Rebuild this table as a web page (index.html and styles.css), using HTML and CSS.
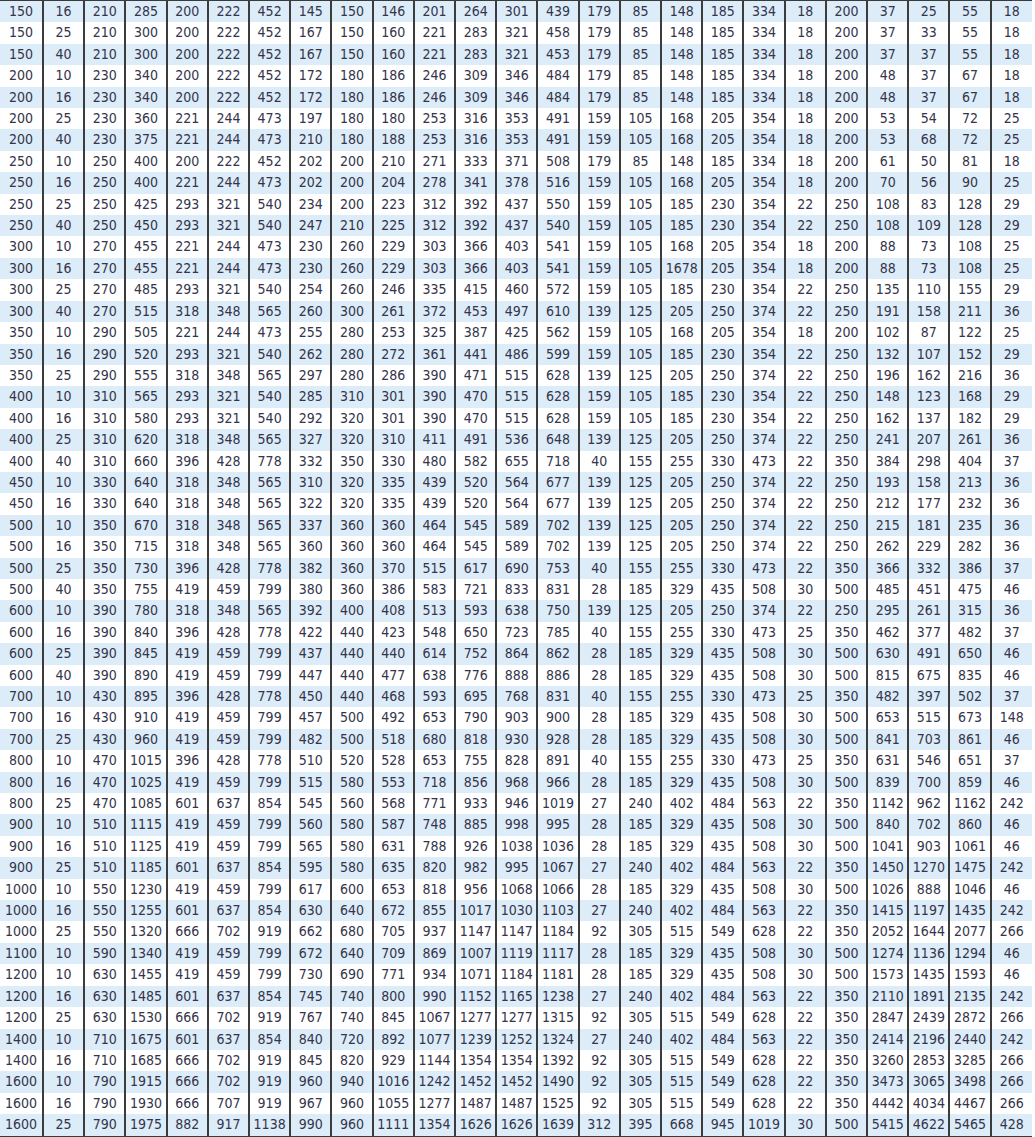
FILE: index.html
```html
<!DOCTYPE html>
<html lang="en">
<head>
<meta charset="utf-8">
<title>Dimension table</title>
<link rel="stylesheet" href="styles.css">
</head>
<body>
<table class="dims">
<colgroup><col class="c-first"><col span="24" class="c-rest"></colgroup>
<tbody>
<tr><td>150<td>16<td>210<td>285<td>200<td>222<td>452<td>145<td>150<td>146<td>201<td>264<td>301<td>439<td>179<td>85<td>148<td>185<td>334<td>18<td>200<td>37<td>25<td>55<td>18</tr>
<tr><td>150<td>25<td>210<td>300<td>200<td>222<td>452<td>167<td>150<td>160<td>221<td>283<td>321<td>458<td>179<td>85<td>148<td>185<td>334<td>18<td>200<td>37<td>33<td>55<td>18</tr>
<tr><td>150<td>40<td>210<td>300<td>200<td>222<td>452<td>167<td>150<td>160<td>221<td>283<td>321<td>453<td>179<td>85<td>148<td>185<td>334<td>18<td>200<td>37<td>37<td>55<td>18</tr>
<tr><td>200<td>10<td>230<td>340<td>200<td>222<td>452<td>172<td>180<td>186<td>246<td>309<td>346<td>484<td>179<td>85<td>148<td>185<td>334<td>18<td>200<td>48<td>37<td>67<td>18</tr>
<tr><td>200<td>16<td>230<td>340<td>200<td>222<td>452<td>172<td>180<td>186<td>246<td>309<td>346<td>484<td>179<td>85<td>148<td>185<td>334<td>18<td>200<td>48<td>37<td>67<td>18</tr>
<tr><td>200<td>25<td>230<td>360<td>221<td>244<td>473<td>197<td>180<td>180<td>253<td>316<td>353<td>491<td>159<td>105<td>168<td>205<td>354<td>18<td>200<td>53<td>54<td>72<td>25</tr>
<tr><td>200<td>40<td>230<td>375<td>221<td>244<td>473<td>210<td>180<td>188<td>253<td>316<td>353<td>491<td>159<td>105<td>168<td>205<td>354<td>18<td>200<td>53<td>68<td>72<td>25</tr>
<tr><td>250<td>10<td>250<td>400<td>200<td>222<td>452<td>202<td>200<td>210<td>271<td>333<td>371<td>508<td>179<td>85<td>148<td>185<td>334<td>18<td>200<td>61<td>50<td>81<td>18</tr>
<tr><td>250<td>16<td>250<td>400<td>221<td>244<td>473<td>202<td>200<td>204<td>278<td>341<td>378<td>516<td>159<td>105<td>168<td>205<td>354<td>18<td>200<td>70<td>56<td>90<td>25</tr>
<tr><td>250<td>25<td>250<td>425<td>293<td>321<td>540<td>234<td>200<td>223<td>312<td>392<td>437<td>550<td>159<td>105<td>185<td>230<td>354<td>22<td>250<td>108<td>83<td>128<td>29</tr>
<tr><td>250<td>40<td>250<td>450<td>293<td>321<td>540<td>247<td>210<td>225<td>312<td>392<td>437<td>540<td>159<td>105<td>185<td>230<td>354<td>22<td>250<td>108<td>109<td>128<td>29</tr>
<tr><td>300<td>10<td>270<td>455<td>221<td>244<td>473<td>230<td>260<td>229<td>303<td>366<td>403<td>541<td>159<td>105<td>168<td>205<td>354<td>18<td>200<td>88<td>73<td>108<td>25</tr>
<tr><td>300<td>16<td>270<td>455<td>221<td>244<td>473<td>230<td>260<td>229<td>303<td>366<td>403<td>541<td>159<td>105<td>1678<td>205<td>354<td>18<td>200<td>88<td>73<td>108<td>25</tr>
<tr><td>300<td>25<td>270<td>485<td>293<td>321<td>540<td>254<td>260<td>246<td>335<td>415<td>460<td>572<td>159<td>105<td>185<td>230<td>354<td>22<td>250<td>135<td>110<td>155<td>29</tr>
<tr><td>300<td>40<td>270<td>515<td>318<td>348<td>565<td>260<td>300<td>261<td>372<td>453<td>497<td>610<td>139<td>125<td>205<td>250<td>374<td>22<td>250<td>191<td>158<td>211<td>36</tr>
<tr><td>350<td>10<td>290<td>505<td>221<td>244<td>473<td>255<td>280<td>253<td>325<td>387<td>425<td>562<td>159<td>105<td>168<td>205<td>354<td>18<td>200<td>102<td>87<td>122<td>25</tr>
<tr><td>350<td>16<td>290<td>520<td>293<td>321<td>540<td>262<td>280<td>272<td>361<td>441<td>486<td>599<td>159<td>105<td>185<td>230<td>354<td>22<td>250<td>132<td>107<td>152<td>29</tr>
<tr><td>350<td>25<td>290<td>555<td>318<td>348<td>565<td>297<td>280<td>286<td>390<td>471<td>515<td>628<td>139<td>125<td>205<td>250<td>374<td>22<td>250<td>196<td>162<td>216<td>36</tr>
<tr><td>400<td>10<td>310<td>565<td>293<td>321<td>540<td>285<td>310<td>301<td>390<td>470<td>515<td>628<td>159<td>105<td>185<td>230<td>354<td>22<td>250<td>148<td>123<td>168<td>29</tr>
<tr><td>400<td>16<td>310<td>580<td>293<td>321<td>540<td>292<td>320<td>301<td>390<td>470<td>515<td>628<td>159<td>105<td>185<td>230<td>354<td>22<td>250<td>162<td>137<td>182<td>29</tr>
<tr><td>400<td>25<td>310<td>620<td>318<td>348<td>565<td>327<td>320<td>310<td>411<td>491<td>536<td>648<td>139<td>125<td>205<td>250<td>374<td>22<td>250<td>241<td>207<td>261<td>36</tr>
<tr><td>400<td>40<td>310<td>660<td>396<td>428<td>778<td>332<td>350<td>330<td>480<td>582<td>655<td>718<td>40<td>155<td>255<td>330<td>473<td>22<td>350<td>384<td>298<td>404<td>37</tr>
<tr><td>450<td>10<td>330<td>640<td>318<td>348<td>565<td>310<td>320<td>335<td>439<td>520<td>564<td>677<td>139<td>125<td>205<td>250<td>374<td>22<td>250<td>193<td>158<td>213<td>36</tr>
<tr><td>450<td>16<td>330<td>640<td>318<td>348<td>565<td>322<td>320<td>335<td>439<td>520<td>564<td>677<td>139<td>125<td>205<td>250<td>374<td>22<td>250<td>212<td>177<td>232<td>36</tr>
<tr><td>500<td>10<td>350<td>670<td>318<td>348<td>565<td>337<td>360<td>360<td>464<td>545<td>589<td>702<td>139<td>125<td>205<td>250<td>374<td>22<td>250<td>215<td>181<td>235<td>36</tr>
<tr><td>500<td>16<td>350<td>715<td>318<td>348<td>565<td>360<td>360<td>360<td>464<td>545<td>589<td>702<td>139<td>125<td>205<td>250<td>374<td>22<td>250<td>262<td>229<td>282<td>36</tr>
<tr><td>500<td>25<td>350<td>730<td>396<td>428<td>778<td>382<td>360<td>370<td>515<td>617<td>690<td>753<td>40<td>155<td>255<td>330<td>473<td>22<td>350<td>366<td>332<td>386<td>37</tr>
<tr><td>500<td>40<td>350<td>755<td>419<td>459<td>799<td>380<td>360<td>386<td>583<td>721<td>833<td>831<td>28<td>185<td>329<td>435<td>508<td>30<td>500<td>485<td>451<td>475<td>46</tr>
<tr><td>600<td>10<td>390<td>780<td>318<td>348<td>565<td>392<td>400<td>408<td>513<td>593<td>638<td>750<td>139<td>125<td>205<td>250<td>374<td>22<td>250<td>295<td>261<td>315<td>36</tr>
<tr><td>600<td>16<td>390<td>840<td>396<td>428<td>778<td>422<td>440<td>423<td>548<td>650<td>723<td>785<td>40<td>155<td>255<td>330<td>473<td>25<td>350<td>462<td>377<td>482<td>37</tr>
<tr><td>600<td>25<td>390<td>845<td>419<td>459<td>799<td>437<td>440<td>440<td>614<td>752<td>864<td>862<td>28<td>185<td>329<td>435<td>508<td>30<td>500<td>630<td>491<td>650<td>46</tr>
<tr><td>600<td>40<td>390<td>890<td>419<td>459<td>799<td>447<td>440<td>477<td>638<td>776<td>888<td>886<td>28<td>185<td>329<td>435<td>508<td>30<td>500<td>815<td>675<td>835<td>46</tr>
<tr><td>700<td>10<td>430<td>895<td>396<td>428<td>778<td>450<td>440<td>468<td>593<td>695<td>768<td>831<td>40<td>155<td>255<td>330<td>473<td>25<td>350<td>482<td>397<td>502<td>37</tr>
<tr><td>700<td>16<td>430<td>910<td>419<td>459<td>799<td>457<td>500<td>492<td>653<td>790<td>903<td>900<td>28<td>185<td>329<td>435<td>508<td>30<td>500<td>653<td>515<td>673<td>148</tr>
<tr><td>700<td>25<td>430<td>960<td>419<td>459<td>799<td>482<td>500<td>518<td>680<td>818<td>930<td>928<td>28<td>185<td>329<td>435<td>508<td>30<td>500<td>841<td>703<td>861<td>46</tr>
<tr><td>800<td>10<td>470<td>1015<td>396<td>428<td>778<td>510<td>520<td>528<td>653<td>755<td>828<td>891<td>40<td>155<td>255<td>330<td>473<td>25<td>350<td>631<td>546<td>651<td>37</tr>
<tr><td>800<td>16<td>470<td>1025<td>419<td>459<td>799<td>515<td>580<td>553<td>718<td>856<td>968<td>966<td>28<td>185<td>329<td>435<td>508<td>30<td>500<td>839<td>700<td>859<td>46</tr>
<tr><td>800<td>25<td>470<td>1085<td>601<td>637<td>854<td>545<td>560<td>568<td>771<td>933<td>946<td>1019<td>27<td>240<td>402<td>484<td>563<td>22<td>350<td>1142<td>962<td>1162<td>242</tr>
<tr><td>900<td>10<td>510<td>1115<td>419<td>459<td>799<td>560<td>580<td>587<td>748<td>885<td>998<td>995<td>28<td>185<td>329<td>435<td>508<td>30<td>500<td>840<td>702<td>860<td>46</tr>
<tr><td>900<td>16<td>510<td>1125<td>419<td>459<td>799<td>565<td>580<td>631<td>788<td>926<td>1038<td>1036<td>28<td>185<td>329<td>435<td>508<td>30<td>500<td>1041<td>903<td>1061<td>46</tr>
<tr><td>900<td>25<td>510<td>1185<td>601<td>637<td>854<td>595<td>580<td>635<td>820<td>982<td>995<td>1067<td>27<td>240<td>402<td>484<td>563<td>22<td>350<td>1450<td>1270<td>1475<td>242</tr>
<tr><td>1000<td>10<td>550<td>1230<td>419<td>459<td>799<td>617<td>600<td>653<td>818<td>956<td>1068<td>1066<td>28<td>185<td>329<td>435<td>508<td>30<td>500<td>1026<td>888<td>1046<td>46</tr>
<tr><td>1000<td>16<td>550<td>1255<td>601<td>637<td>854<td>630<td>640<td>672<td>855<td>1017<td>1030<td>1103<td>27<td>240<td>402<td>484<td>563<td>22<td>350<td>1415<td>1197<td>1435<td>242</tr>
<tr><td>1000<td>25<td>550<td>1320<td>666<td>702<td>919<td>662<td>680<td>705<td>937<td>1147<td>1147<td>1184<td>92<td>305<td>515<td>549<td>628<td>22<td>350<td>2052<td>1644<td>2077<td>266</tr>
<tr><td>1100<td>10<td>590<td>1340<td>419<td>459<td>799<td>672<td>640<td>709<td>869<td>1007<td>1119<td>1117<td>28<td>185<td>329<td>435<td>508<td>30<td>500<td>1274<td>1136<td>1294<td>46</tr>
<tr><td>1200<td>10<td>630<td>1455<td>419<td>459<td>799<td>730<td>690<td>771<td>934<td>1071<td>1184<td>1181<td>28<td>185<td>329<td>435<td>508<td>30<td>500<td>1573<td>1435<td>1593<td>46</tr>
<tr><td>1200<td>16<td>630<td>1485<td>601<td>637<td>854<td>745<td>740<td>800<td>990<td>1152<td>1165<td>1238<td>27<td>240<td>402<td>484<td>563<td>22<td>350<td>2110<td>1891<td>2135<td>242</tr>
<tr><td>1200<td>25<td>630<td>1530<td>666<td>702<td>919<td>767<td>740<td>845<td>1067<td>1277<td>1277<td>1315<td>92<td>305<td>515<td>549<td>628<td>22<td>350<td>2847<td>2439<td>2872<td>266</tr>
<tr><td>1400<td>10<td>710<td>1675<td>601<td>637<td>854<td>840<td>720<td>892<td>1077<td>1239<td>1252<td>1324<td>27<td>240<td>402<td>484<td>563<td>22<td>350<td>2414<td>2196<td>2440<td>242</tr>
<tr><td>1400<td>16<td>710<td>1685<td>666<td>702<td>919<td>845<td>820<td>929<td>1144<td>1354<td>1354<td>1392<td>92<td>305<td>515<td>549<td>628<td>22<td>350<td>3260<td>2853<td>3285<td>266</tr>
<tr><td>1600<td>10<td>790<td>1915<td>666<td>702<td>919<td>960<td>940<td>1016<td>1242<td>1452<td>1452<td>1490<td>92<td>305<td>515<td>549<td>628<td>22<td>350<td>3473<td>3065<td>3498<td>266</tr>
<tr><td>1600<td>16<td>790<td>1930<td>666<td>707<td>919<td>967<td>960<td>1055<td>1277<td>1487<td>1487<td>1525<td>92<td>305<td>515<td>549<td>628<td>22<td>350<td>4442<td>4034<td>4467<td>266</tr>
<tr><td>1600<td>25<td>790<td>1975<td>882<td>917<td>1138<td>990<td>960<td>1111<td>1354<td>1626<td>1626<td>1639<td>312<td>395<td>668<td>945<td>1019<td>30<td>500<td>5415<td>4622<td>5465<td>428</tr>
</tbody>
</table>
</body>
</html>
```
FILE: styles.css
```css
html, body {
  margin: 0;
  padding: 0;
  background: #ffffff;
}

.dims {
  width: 1032px;
  table-layout: fixed;
  border-collapse: collapse;
  border-top: 1px solid #3a3a3a;
  border-bottom: 2px solid #3a3a3a;
  font-family: "DejaVu Sans Condensed", "DejaVu Sans", sans-serif;
  font-stretch: condensed;
  font-size: 14px;
  color: #34344a;
}

.c-first {
  width: 43px;
}

.c-rest {
  width: 41.2px;
}

.dims tr {
  height: 21.4px;
}

.dims tr:nth-child(odd) {
  background: #dcecf8;
}

.dims td {
  padding: 0;
  text-align: center;
  vertical-align: middle;
  line-height: 21.4px;
  white-space: nowrap;
  border-left: 2px solid #3c3c3c;
}

.dims td:first-child {
  border-left: none;
}
```
